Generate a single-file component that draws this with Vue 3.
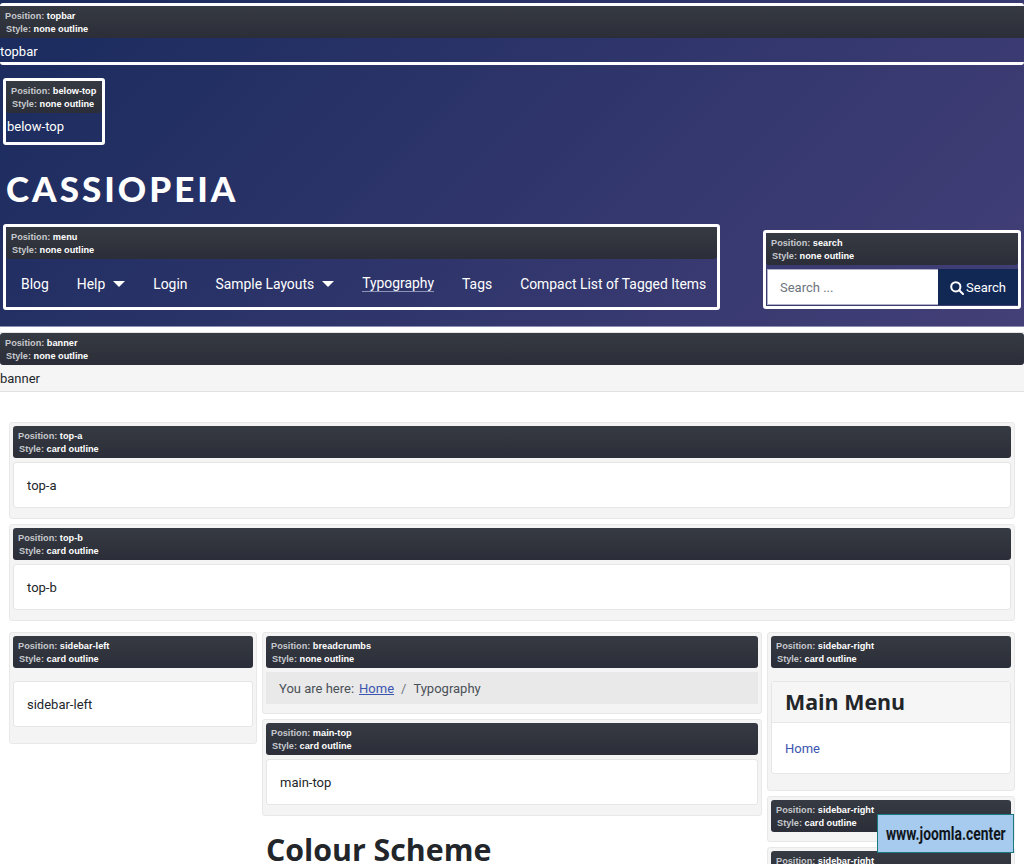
<script setup>
const navItems = [
  { label: 'Blog' },
  { label: 'Help', caret: true },
  { label: 'Login' },
  { label: 'Sample Layouts', caret: true },
  { label: 'Typography', active: true },
  { label: 'Tags' },
  { label: 'Compact List of Tagged Items' }
]
const topCards = ['top-a', 'top-b']
</script>

<template>
  <div class="page">
    <header class="header">
      <div class="outline topbar">
        <div class="info">
          <div><span>Position:</span> topbar</div>
          <div class="style-line"><span>Style:</span> none outline</div>
        </div>
        <div class="plain">topbar</div>
      </div>

      <div class="outline below-top">
        <div class="info">
          <div><span>Position:</span> below-top</div>
          <div class="style-line"><span>Style:</span> none outline</div>
        </div>
        <div class="plain">below-top</div>
      </div>

      <div class="brand">CASSIOPEIA</div>

      <div class="nav-row">
        <div class="outline menu">
          <div class="info">
            <div><span>Position:</span> menu</div>
            <div class="style-line"><span>Style:</span> none outline</div>
          </div>
          <ul class="nav">
            <li v-for="item in navItems" :key="item.label">
              <a :class="{ active: item.active }">{{ item.label }}</a>
              <i v-if="item.caret" class="caret"></i>
            </li>
          </ul>
        </div>

        <div class="outline search">
          <div class="info">
            <div><span>Position:</span> search</div>
            <div class="style-line"><span>Style:</span> none outline</div>
          </div>
          <div class="search-form">
            <div class="search-input">Search ...</div>
            <div class="search-btn">
              <svg width="14" height="14" viewBox="0 0 14 14" fill="none" stroke="#fff" stroke-width="2">
                <circle cx="5.8" cy="5.8" r="4.6" />
                <path d="M9.2 9.2 13 13" stroke-linecap="round" />
              </svg>
              Search
            </div>
          </div>
        </div>
      </div>
    </header>

    <section class="banner">
      <div class="info">
        <div><span>Position:</span> banner</div>
        <div class="style-line"><span>Style:</span> none outline</div>
      </div>
      <div class="plain">banner</div>
    </section>

    <main class="content">
      <div v-for="name in topCards" :key="name" class="box wide">
        <div class="info">
          <div><span>Position:</span> {{ name }}</div>
          <div class="style-line"><span>Style:</span> card outline</div>
        </div>
        <div class="card">{{ name }}</div>
      </div>

      <div class="columns">
        <div class="col">
          <div class="box tall">
            <div class="info">
              <div><span>Position:</span> sidebar-left</div>
              <div class="style-line"><span>Style:</span> card outline</div>
            </div>
            <div class="card">sidebar-left</div>
          </div>
        </div>

        <div class="col">
          <div class="box crumbs-box">
            <div class="info">
              <div><span>Position:</span> breadcrumbs</div>
              <div class="style-line"><span>Style:</span> none outline</div>
            </div>
            <div class="crumbs">
              You are here:
              <a class="crumb-link">Home</a>
              <span class="sep">/</span>
              Typography
            </div>
          </div>
          <div class="box wide">
            <div class="info">
              <div><span>Position:</span> main-top</div>
              <div class="style-line"><span>Style:</span> card outline</div>
            </div>
            <div class="card">main-top</div>
          </div>
          <h1 class="title">Colour Scheme</h1>
        </div>

        <div class="col">
          <div class="box tall">
            <div class="info">
              <div><span>Position:</span> sidebar-right</div>
              <div class="style-line"><span>Style:</span> card outline</div>
            </div>
            <div class="menu-card">
              <h3>Main Menu</h3>
              <div class="menu-card-body"><a>Home</a></div>
            </div>
          </div>
          <div class="box short">
            <div class="info">
              <div><span>Position:</span> sidebar-right</div>
              <div class="style-line"><span>Style:</span> card outline</div>
            </div>
          </div>
          <div class="box short">
            <div class="info">
              <div><span>Position:</span> sidebar-right</div>
              <div class="style-line"><span>Style:</span> card outline</div>
            </div>
          </div>
        </div>
      </div>
    </main>

    <div class="badge"><span>www.joomla.center</span></div>
  </div>
</template>

<style>
html, body {
  margin: 0;
  overflow: hidden;
}
</style>

<style scoped>
.page {
  height: 864px;
  overflow: hidden;
  background: #fff;
  color: #22262a;
  font-family: Roboto, "Open Sans", sans-serif;
  font-size: 13px;
}

.header {
  height: 327px;
  box-sizing: border-box;
  padding-top: 3px;
  background: linear-gradient(135deg, #1a2b5e 0%, #433f77 100%);
  color: #fff;
  border-bottom: 1px solid #8d8fb0;
}

.outline {
  border: 3px solid #fff;
  border-radius: 3px;
}

.info {
  box-sizing: border-box;
  height: 32px;
  padding: 4px 5px 0;
  background: linear-gradient(#363a42, #2b2e38);
  border-radius: 3px;
  color: #fff;
  font-family: "Liberation Sans", Arial, sans-serif;
  font-size: 9.2px;
  font-weight: 700;
  line-height: 13px;
  white-space: nowrap;
}

.info span {
  color: #c6c8cc;
}

.style-line {
  padding-left: 1px;
}

.plain {
  line-height: 24px;
}

.topbar {
  border-width: 3px 0;
}

.topbar .info {
  border-radius: 0;
}

.topbar .plain {
  padding-top: 4px;
  line-height: 20px;
}

.below-top {
  width: 96px;
  height: 61px;
  margin: 13px 0 0 3px;
}

.below-top .plain {
  padding: 1px 0 0 1px;
  line-height: 26px;
}

.brand {
  margin: 24px 0 0 6px;
  height: 38px;
  font-family: Lato, "Liberation Sans", sans-serif;
  font-size: 35px;
  font-weight: 900;
  letter-spacing: 3px;
  line-height: 38px;
}

.nav-row {
  display: flex;
  justify-content: space-between;
  align-items: flex-end;
  margin: 17px 3px 0;
}

.menu {
  width: 711px;
}

.nav {
  box-sizing: border-box;
  display: flex;
  align-items: center;
  gap: 28px;
  height: 48px;
  margin: 0;
  padding: 1px 14px 0 15px;
  list-style: none;
  font-size: 13.9px;
  white-space: nowrap;
}

.nav li {
  display: flex;
  align-items: center;
  gap: 8px;
}

.nav a.active {
  border-bottom: 1px solid #8d93b5;
}

.caret {
  width: 0;
  height: 0;
  border-left: 6px solid transparent;
  border-right: 6px solid transparent;
  border-top: 6px solid #fff;
}

.search {
  width: 252px;
  margin-bottom: 1px;
}

.search-form {
  display: flex;
  height: 36px;
  margin: 4px 0 1px 1px;
  border: 0;
}

.search-input {
  box-sizing: border-box;
  flex: 1;
  display: flex;
  align-items: center;
  padding: 1px 0 0 12px;
  background: #fff;
  color: #6d757d;
  border: 1px solid #b2b3cb;
  border-right: 0;
}

.search-btn {
  box-sizing: border-box;
  display: flex;
  align-items: center;
  justify-content: center;
  gap: 2px;
  width: 80px;
  padding-top: 1px;
  background: #112855;
  color: #fff;
}

.banner {
  margin-top: 5px;
  border-top: 1px solid #e4e4e4;
}

.banner .plain {
  box-sizing: border-box;
  height: 27px;
  padding-top: 1px;
  line-height: 26px;
  background: #f5f5f5;
  border-bottom: 1px solid #e2e2e2;
  color: #22262a;
}

.content {
  padding: 30px 9px 0;
}

.box {
  box-sizing: border-box;
  margin-bottom: 5px;
  padding: 3px;
  background: #f4f4f4;
  border: 1px solid #e8e8e8;
  border-radius: 3px;
}

.box.wide {
  height: 97px;
}

.box .info {
  margin-bottom: 4px;
}

.card {
  box-sizing: border-box;
  height: 46px;
  display: flex;
  align-items: center;
  padding-left: 13px;
  background: #fff;
  border: 1px solid #e6e6e6;
  border-radius: 3px;
}

.columns {
  display: grid;
  grid-template-columns: 248px 500px 248px;
  gap: 5px;
  margin-top: 11px;
}

.tall {
  padding-bottom: 16px;
}

.tall .info {
  margin-bottom: 13px;
}

.crumbs-box {
  height: 82px;
}

.crumbs {
  height: 32px;
  display: flex;
  align-items: center;
  gap: 5px;
  padding-left: 13px;
  background: #e9e9e9;
  color: #495057;
}

.crumb-link {
  color: #3a55b0;
  text-decoration: underline;
}

.sep {
  margin: 0 2px;
  color: #6d757d;
}

.title {
  margin: 14px 0 0 4px;
  color: #22262a;
  font-family: "Open Sans", sans-serif;
  font-size: 30.3px;
  font-weight: 700;
  line-height: 40px;
}

.menu-card {
  background: #fff;
  border: 1px solid #e6e6e6;
  border-radius: 3px;
}

.menu-card h3 {
  height: 40px;
  margin: 0;
  padding-left: 13px;
  background: #f6f6f6;
  border-bottom: 1px solid #e8e8e8;
  color: #22262a;
  font-family: "Open Sans", sans-serif;
  font-size: 21.4px;
  font-weight: 700;
  line-height: 40px;
}

.menu-card-body {
  height: 50px;
  display: flex;
  align-items: center;
  padding-left: 13px;
  color: #3a55b0;
}

.box.short {
  height: 46px;
}

.badge {
  position: fixed;
  right: 10px;
  bottom: 11px;
  box-sizing: border-box;
  width: 137px;
  height: 39px;
  display: flex;
  align-items: center;
  justify-content: center;
  background: #a6cbee;
  border: 1px solid #1a7a80;
  color: #10151c;
  font-family: Roboto, sans-serif;
  font-size: 18px;
  font-weight: 700;
  white-space: nowrap;
}

.badge span {
  display: inline-block;
  transform: scaleX(0.77);
}
</style>
